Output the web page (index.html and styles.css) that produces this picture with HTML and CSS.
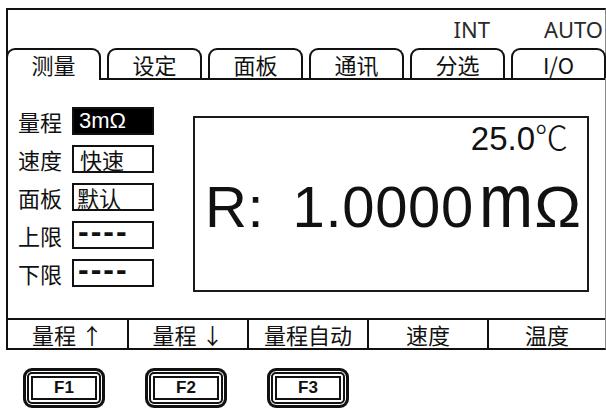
FILE: index.html
```html
<!DOCTYPE html>
<html lang="zh-CN">
<head>
<meta charset="utf-8">
<title>测量</title>
<link rel="stylesheet" href="styles.css">
</head>
<body>
<div class="screen">
  <div class="status"><span>INT</span><span>AUTO</span></div>
  <div class="tabs">
    <div class="tab active">测量</div>
    <div class="tab">设定</div>
    <div class="tab">面板</div>
    <div class="tab">通讯</div>
    <div class="tab">分选</div>
    <div class="tab">I/O</div>
  </div>
  <div class="content">
    <div class="params">
      <div class="param"><span class="plabel">量程</span><span class="pval inv">3mΩ</span></div>
      <div class="param"><span class="plabel">速度</span><span class="pval shift">快速</span></div>
      <div class="param"><span class="plabel">面板</span><span class="pval">默认</span></div>
      <div class="param"><span class="plabel">上限</span><span class="pval dash">----</span></div>
      <div class="param"><span class="plabel">下限</span><span class="pval dash">----</span></div>
    </div>
    <div class="display">
      <div class="temp">25.0<span class="deg">℃</span></div>
      <div class="reading"><span class="rl">R:</span>1.0000<span class="unit-m">m</span><span class="unit-o">Ω</span></div>
    </div>
  </div>
  <div class="fbar">
    <div class="fkey">量程 ↑</div>
    <div class="fkey">量程 ↓</div>
    <div class="fkey">量程自动</div>
    <div class="fkey">速度</div>
    <div class="fkey">温度</div>
  </div>
</div>
<div class="keys">
  <div class="key"><div class="key-face">F1</div></div>
  <div class="key"><div class="key-face">F2</div></div>
  <div class="key"><div class="key-face">F3</div></div>
</div>
</body>
</html>
```
FILE: styles.css
```css
html, body {
  margin: 0;
  background: #fff;
}
body {
  font-family: "Noto Sans CJK SC", "Liberation Sans", sans-serif;
  color: #111;
  width: 606px;
  height: 409px;
  overflow: hidden;
}
.screen {
  margin: 8px 0 0 6px;
  width: 600px;
  height: 342px;
  box-sizing: border-box;
  border: 2px solid #111;
  border-right: 1px solid #888;
  display: flex;
  flex-direction: column;
}
.status {
  height: 38px;
  flex: none;
  display: flex;
  justify-content: flex-end;
  align-items: center;
  gap: 54px;
  padding-right: 2px;
  font-family: "Noto Sans", sans-serif;
  font-size: 22px;
  color: #2a2a2a;
}
.tabs {
  flex: none;
  height: 32px;
  box-sizing: border-box;
  border-bottom: 2px solid #111;
  display: flex;
  align-items: flex-end;
  gap: 6px;
  margin-left: -2px;
}
.tab {
  width: 95px;
  height: 30px;
  flex: none;
  box-sizing: border-box;
  border: 2px solid #111;
  border-bottom: none;
  border-radius: 9px 9px 0 0;
  display: flex;
  align-items: center;
  justify-content: center;
  font-size: 22px;
  line-height: 1;
  background: #fff;
}
.tab.active {
  height: 32px;
  margin-bottom: -2px;
  position: relative;
  padding-bottom: 2px;
}
.content {
  flex: 1;
  display: flex;
  padding: 27px 0 0 10px;
}
.params {
  display: flex;
  flex-direction: column;
  gap: 10px;
}
.param {
  display: flex;
  align-items: center;
  gap: 10px;
  height: 28px;
}
.plabel {
  font-size: 22px;
  line-height: 1;
}
.pval {
  width: 82px;
  height: 28px;
  box-sizing: border-box;
  border: 2px solid #111;
  font-size: 22px;
  line-height: 24px;
  padding-left: 3px;
  white-space: nowrap;
}
.pval.shift {
  padding-left: 6px;
}
.pval.inv {
  background: #000;
  color: #fff;
  font-family: "Liberation Sans", sans-serif;
  padding-left: 5px;
}
.pval.dash {
  font-family: "Liberation Sans", sans-serif;
  font-weight: bold;
  font-size: 32px;
  line-height: 17px;
  letter-spacing: 2px;
  padding-left: 4px;
}
.display {
  margin: 9px 0 0 39px;
  width: 396px;
  height: 176px;
  box-sizing: border-box;
  border: 2px solid #1a1a1a;
  display: flex;
  flex-direction: column;
}
.temp {
  align-self: flex-end;
  margin: 2px 19px 0 0;
  font-family: "Liberation Sans", sans-serif;
  font-size: 33px;
  line-height: 33px;
}
.deg {
  font-family: "Noto Sans CJK SC", sans-serif;
  font-weight: 300;
}
.reading {
  margin: 24px 0 0 10px;
  font-family: "Liberation Sans", sans-serif;
  font-size: 58px;
  line-height: 56px;
  letter-spacing: 0.7px;
  white-space: nowrap;
}
.rl {
  margin-right: 28px;
}
.unit-m {
  display: inline-block;
  line-height: 40px;
  margin-left: 8px;
  letter-spacing: 0;
  transform: scale(1.12, 1.32);
  transform-origin: 50% 40px;
}
.unit-o {
  display: inline-block;
  line-height: 40px;
  margin-left: 6px;
  letter-spacing: 0;
  transform: scaleX(1.08);
  transform-origin: 50% 40px;
}
.fbar {
  flex: none;
  height: 30px;
  box-sizing: border-box;
  border-top: 2px solid #111;
  display: flex;
}
.fkey {
  width: 120px;
  flex: none;
  box-sizing: border-box;
  border-left: 2px solid #111;
  display: flex;
  align-items: center;
  justify-content: center;
  font-size: 22px;
  line-height: 1;
  white-space: pre;
}
.fkey:first-child {
  width: 119px;
  border-left: none;
}
.fkey:last-child {
  flex: 1;
}
.keys {
  display: flex;
  gap: 40px;
  margin: 18px 0 0 23px;
}
.key {
  width: 82px;
  height: 40px;
  box-sizing: border-box;
  border: 3px solid #111;
  border-radius: 9px;
  box-shadow: inset 0 0 0 1px #fff, inset 0 0 0 3px #111;
  padding: 5px;
}
.key-face {
  height: 100%;
  box-sizing: border-box;
  border: 2px solid #111;
  display: flex;
  align-items: center;
  justify-content: center;
  font-family: "Liberation Sans", sans-serif;
  font-weight: bold;
  font-size: 17px;
}
```
